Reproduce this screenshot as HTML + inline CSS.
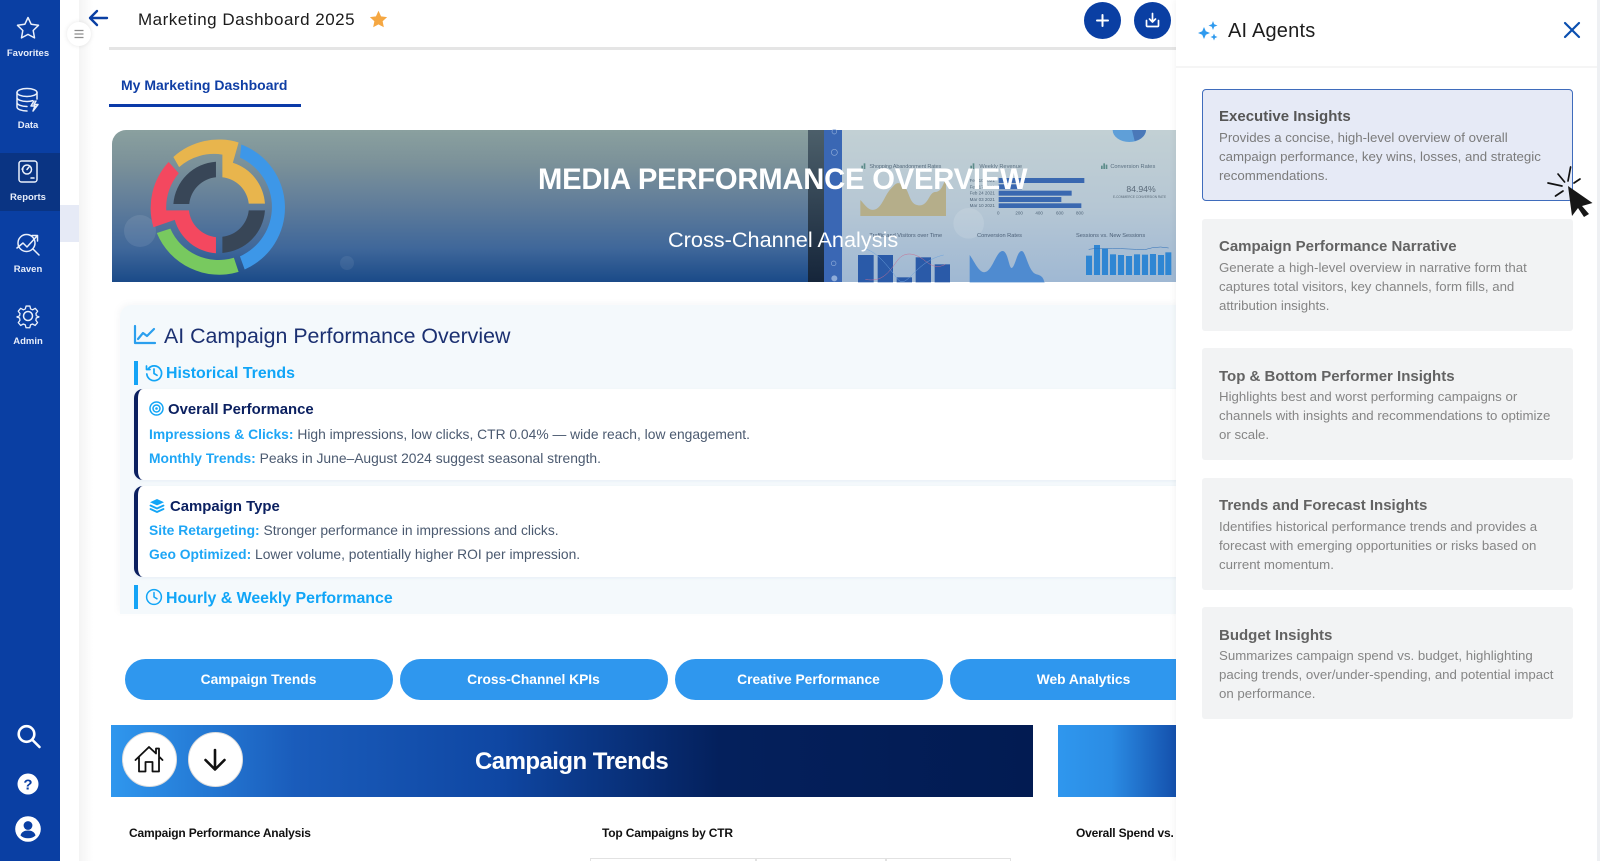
<!DOCTYPE html>
<html lang="en"><head><meta charset="utf-8"><title>Marketing Dashboard 2025</title>
<style>
*{box-sizing:border-box}
html{background:#fff}
html,body{margin:0;padding:0;width:1600px;height:861px;overflow:hidden;font-family:"Liberation Sans",sans-serif}
body{background:#fff;filter:blur(.3px)}
.a{position:absolute;white-space:nowrap}
#side{position:absolute;left:0;top:0;width:60px;height:861px;background:#0a3fa3}
.lbl{position:absolute;left:-2px;width:60px;text-align:center;color:#e8eefa;font-size:9.5px;font-weight:bold;line-height:12px}
.ic{position:absolute;left:14px;width:28px;height:28px}
.ic *{fill:none;stroke:#eaf0fb;stroke-width:1.5;stroke-linecap:round;stroke-linejoin:round}
.hd{color:#10a5f7;font-weight:bold;font-size:15.9px;line-height:20px}
.bar{position:absolute;left:134px;width:3.5px;background:#14a4f6}
.card{position:absolute;left:134px;width:1060px;background:#fff;border-left:4px solid #0b2060;border-radius:9px 0 0 9px;box-shadow:0 1px 3px rgba(80,120,160,.08)}
.ct{color:#0b2060;font-weight:bold;font-size:14.9px;line-height:18px}
.ln{font-size:13.84px;line-height:18px;color:#4b5a70}
.ln b{color:#1ea6f6}
.pill{position:absolute;top:659px;height:41px;width:268px;border-radius:21px;background:#2f97ee;color:#fff;font-size:13.8px;font-weight:bold;text-align:center;line-height:42px}
.ag{position:absolute;left:1202px;width:371px;height:112px;background:#f2f3f4;border-radius:3px;color:#858585}
.ag h3{margin:0;position:absolute;top:18.500px;left:17px;font-size:15px;line-height:20px;color:#636363;font-weight:bold;white-space:nowrap}
.ag p{margin:0;position:absolute;top:39px;left:17px;font-size:13.25px;line-height:19px;white-space:nowrap}
.sub{font-size:12px;letter-spacing:-.18px;font-weight:bold;color:#111;line-height:16px}
</style></head><body>

<!-- gutter -->
<div class="a" style="left:60px;top:205px;width:19px;height:37px;background:#e6eaf6"></div>
<div class="a" style="left:79px;top:0;width:14px;height:861px;background:linear-gradient(90deg,#f4f4f4,#fff)"></div>

<!-- top bar -->
<svg class="a" style="left:87px;top:8px" width="22" height="20" viewBox="0 0 22 20"><path d="M20 10H3M10 3L3 10l7 7" fill="none" stroke="#0a3fa3" stroke-width="2.400" stroke-linecap="round" stroke-linejoin="round"/></svg>
<div class="a" style="left:138px;top:9px;font-size:17px;line-height:22px;color:#1b1b1b;letter-spacing:.5px">Marketing Dashboard 2025</div>
<svg class="a" style="left:369px;top:10px" width="19" height="18" viewBox="0 0 24 23"><path d="M12 1l3.300 7.200 7.700.9-5.700 5.300 1.500 7.700L12 18.300 5.200 22.100l1.500-7.700L1 9.100l7.700-.9z" fill="#f5a742"/></svg>
<div class="a" style="left:109px;top:47px;width:1067px;height:2.500px;background:#e5e5e5"></div>
<div class="a" style="left:1084px;top:2px;width:37px;height:37px;border-radius:50%;background:#0a3fa3"></div>
<svg class="a" style="left:1084px;top:2px" width="37" height="37" viewBox="0 0 37 37"><path d="M18.500 13v11M13 18.500h11" stroke="#fff" stroke-width="2" stroke-linecap="round"/></svg>
<div class="a" style="left:1134px;top:2px;width:37px;height:37px;border-radius:50%;background:#0a3fa3"></div>
<svg class="a" style="left:1134px;top:2px" width="37" height="37" viewBox="0 0 37 37"><path d="M18.500 11.500v8.500M15.500 17l3 3 3-3M12.500 18.500v5a1 1 0 0 0 1 1h10a1 1 0 0 0 1-1v-5" fill="none" stroke="#fff" stroke-width="1.700" stroke-linecap="round" stroke-linejoin="round"/></svg>

<!-- tab -->
<div class="a" style="left:121px;top:76px;font-size:14px;line-height:18px;font-weight:bold;color:#0f3ea5">My Marketing Dashboard</div>
<div class="a" style="left:109px;top:104px;width:192px;height:2.500px;background:#0a3aa8"></div>

<!-- hero banner -->
<div class="a" style="left:112px;top:130px;width:1064px;height:152px;border-radius:14px 0 0 0;overflow:hidden;background:linear-gradient(180deg,#8aa09f 0%,#7b9199 22%,#5f7c9a 50%,#3f679a 78%,#1a4a88 100%)">
  <div class="a" style="left:12px;top:85px;width:32px;height:32px;border-radius:50%;background:rgba(255,255,255,.09)"></div>
  <div class="a" style="left:228px;top:126px;width:14px;height:14px;border-radius:50%;background:rgba(255,255,255,.07)"></div>
  <div class="a" style="left:696px;top:0;width:16px;height:152px;background:linear-gradient(180deg,#4c5f6a,#15253a)"></div>
  <div class="a" style="left:712px;top:0;width:18px;height:152px;background:#3a67b4"></div>
  <div class="a" style="left:730px;top:0;width:334px;height:152px;background:linear-gradient(180deg,#c2d0d4,#b6c7d4 50%,#9fb8d3)"></div>
</div>
<svg class="a" style="left:780px;top:120px;overflow:hidden" width="396" height="170" viewBox="0 0 1176 510" font-family="Liberation Sans, sans-serif">
  <circle cx="157" cy="97" r="9" fill="none" stroke="#8facd8" stroke-width="2"/>
  <circle cx="157" cy="35" r="7" fill="none" stroke="#8facd8" stroke-width="2"/>
  <circle cx="155" cy="430" r="7" fill="none" stroke="#8facd8" stroke-width="2"/>
  <circle cx="157" cy="475" r="9" fill="#8facd8"/>
  <path d="M992 30a50 36 0 0 0 100 0z" fill="#5f9fd8"/><path d="M1050 30h42a46 36 0 0 1-34 33z" fill="#4a78b8"/>
  <path d="M235 288V240c15 15 25 35 45 28s30-45 45-60 20-28 40-10 15 55 45 58 30-40 50-40 25-30 32-40v112z" fill="#b5ae8a"/>
  <text x="262" y="144" font-size="17" fill="#5a6f80" textLength="216">Shopping Abandonment Rates</text>
  <text x="592" y="144" font-size="17" fill="#5a6f80">Weekly Revenue</text>
  <text x="985" y="144" font-size="17" fill="#5a6f80">Conversion Rates</text>
  <g fill="#5c8c8a"><rect x="238" y="137" width="5" height="10"/><rect x="245" y="130" width="5" height="17"/><rect x="565" y="137" width="5" height="10"/><rect x="572" y="130" width="5" height="17"/><rect x="957" y="137" width="5" height="10"/><rect x="964" y="130" width="5" height="17"/><rect x="971" y="134" width="5" height="13"/></g>
  <g fill="#3a68b0"><rect x="650" y="174" width="257" height="15"/><rect x="650" y="193" width="70" height="15"/><rect x="650" y="212" width="219" height="15"/><rect x="650" y="231" width="188" height="15"/><rect x="650" y="250" width="248" height="14"/></g>
  <g font-size="13.500" fill="#4f6478"><text x="563" y="186">Feb 10 2021</text><text x="563" y="205">Feb 17 2021</text><text x="563" y="224">Feb 24 2021</text><text x="563" y="243">Mar 03 2021</text><text x="563" y="261">Mar 10 2021</text>
  <text x="645" y="284">0</text><text x="700" y="284">200</text><text x="760" y="284">400</text><text x="822" y="284">600</text><text x="882" y="284">800</text></g>
  <text x="1033" y="216" font-size="26" fill="#5a6a78">84.94%</text>
  <text x="993" y="234" font-size="9.500" fill="#5a6a78">E-COMMERCE CONVERSION RATE</text>
  <circle cx="560" cy="310" r="46" fill="rgba(255,255,255,.12)"/>
  <text x="262" y="351" font-size="17" fill="#4c6078">Traffic and Visitors over Time</text>
  <text x="585" y="351" font-size="17" fill="#4c6078">Conversion Rates</text>
  <text x="882" y="351" font-size="17" fill="#4c6078">Sessions vs. New Sessions</text>
  <g fill="#2a5aa8"><rect x="228" y="405" width="47" height="82"/><rect x="287" y="405" width="46" height="82"/><rect x="344" y="472" width="46" height="15"/><rect x="401" y="412" width="46" height="75"/><rect x="458" y="433" width="46" height="54"/></g>
  <path d="M250 478c50 10 70-20 95-55s60-20 85 0 40 20 60 10" fill="none" stroke="#c96f92" stroke-width="1.500"/>
  <path d="M245 385c40 10 70 50 100 90s50-50 140-70" fill="none" stroke="#6ea3dd" stroke-width="1.500"/>
  <path d="M563 487V405c15 20 30 60 50 50s30-60 48-62 20 60 30 50 15-50 28-50 20 65 45 70 20 24 25 24z" fill="#4f8bd0"/>
  <g fill="#2f86d3"><rect x="912" y="407" width="18" height="58"/><rect x="936" y="375" width="18" height="90"/><rect x="960" y="385" width="18" height="80"/><rect x="984" y="403" width="18" height="62"/><rect x="1008" y="405" width="18" height="60"/><rect x="1032" y="408" width="18" height="57"/><rect x="1056" y="403" width="18" height="62"/><rect x="1080" y="404" width="18" height="61"/><rect x="1104" y="402" width="18" height="63"/><rect x="1128" y="405" width="18" height="60"/><rect x="1150" y="397" width="18" height="68"/></g>
  <path d="M920 388l24-3 24 2 24-2 24 1 24 1 24 1 24 1 24-6 24-2 24 3" fill="none" stroke="#2d6fb8" stroke-width="1.500"/>
</svg>
<svg class="a" style="left:146px;top:134px" width="146" height="146" viewBox="-216 -216 432 432">
  <path d="M66-185A200 200 0 0 1 76 185L62 146A160 160 0 0 0 62-146Z" fill="#3d97e8"/>
  <path d="M-135-148A200 200 0 0 1 58-191L41-131A137 137 0 0 1 136-10L88-10A88 88 0 0 0 10-88L10-155A155 155 0 0 0-118-118Z" fill="#e8b54d"/>
  <path d="M-9-134A135 135 0 0 0-135-9L-88-9A88 88 0 0 1-9-88Z" fill="#384657"/>
  <path d="M10 136A136 136 0 0 0 136 10L88 10A88 88 0 0 1 10 88Z" fill="#384657"/>
  <path d="M-149-133A200 200 0 0 0-194 60L-131 38A137 137 0 0 0-9 137L-9 89A89 89 0 0 1-89 10L-156 10A156 156 0 0 1-119-100Z" fill="#f4485f"/>
  <path d="M-184 77A200 200 0 0 0 58 192L44 150A156 156 0 0 1-144 64Z" fill="#78c95f"/>
</svg>
<div class="a" style="left:538px;top:161px;font-size:29.200px;line-height:38px;color:#fff;font-weight:bold;letter-spacing:-.2px">MEDIA PERFORMANCE OVERVIEW</div>
<div class="a" style="left:668px;top:226px;font-size:21.700px;line-height:28px;color:#fff">Cross-Channel Analysis</div>

<!-- AI card -->
<div class="a" style="left:120px;top:305px;width:1060px;height:309px;background:#f4f9fc;border-radius:12px 0 0 0;overflow:hidden;box-shadow:-2px -2px 6px rgba(120,140,160,.06)"></div>
<svg class="a" style="left:133px;top:324px" width="24" height="22" viewBox="0 0 24 22"><path d="M2 2v17h20M5 15l5-6 4 3 7-7" fill="none" stroke="#2a9fee" stroke-width="2.200" stroke-linecap="round" stroke-linejoin="round"/></svg>
<div class="a" style="left:164px;top:321.500px;font-size:21.350px;line-height:28px;color:#1b3071">AI Campaign Performance Overview</div>

<div class="bar" style="top:361px;height:24px"></div>
<svg class="a" style="left:145px;top:364px" width="18" height="18" viewBox="0 0 18 18"><path d="M3.500 4.500A7.400 7.400 0 1 1 1.800 10M1.500 2v3.500H5M9 5v4.500l3 1.800" fill="none" stroke="#12a5f6" stroke-width="1.700" stroke-linecap="round" stroke-linejoin="round"/></svg>
<div class="a hd" style="left:166px;top:364px">Historical Trends</div>

<div class="card" style="top:389px;height:91px"></div>
<svg class="a" style="left:149px;top:401px" width="15" height="15" viewBox="0 0 15 15"><g fill="none" stroke="#12a5f6" stroke-width="1.500"><circle cx="7.500" cy="7.500" r="6.500"/><circle cx="7.500" cy="7.500" r="3.500"/></g><circle cx="7.500" cy="7.500" r="1.300" fill="#12a5f6"/></svg>
<div class="a ct" style="left:168px;top:401px">Overall Performance</div>
<div class="a ln" style="left:149px;top:424.500px"><b>Impressions &amp; Clicks:</b> High impressions, low clicks, CTR 0.04% — wide reach, low engagement.</div>
<div class="a ln" style="left:149px;top:448.500px"><b>Monthly Trends:</b> Peaks in June–August 2024 suggest seasonal strength.</div>

<div class="card" style="top:486px;height:91px"></div>
<svg class="a" style="left:149px;top:498px" width="16" height="16" viewBox="0 0 16 16"><path d="M8 1l7 3.200-7 3.200-7-3.200z" fill="#12a5f6"/><path d="M1.500 7.500L8 10.500l6.500-3M1.500 11L8 14l6.500-3" fill="none" stroke="#12a5f6" stroke-width="1.800" stroke-linejoin="round" stroke-linecap="round"/></svg>
<div class="a ct" style="left:170px;top:498px">Campaign Type</div>
<div class="a ln" style="left:149px;top:521px"><b>Site Retargeting:</b> Stronger performance in impressions and clicks.</div>
<div class="a ln" style="left:149px;top:545px"><b>Geo Optimized:</b> Lower volume, potentially higher ROI per impression.</div>

<div class="bar" style="top:585px;height:24px"></div>
<svg class="a" style="left:145px;top:588px" width="18" height="18" viewBox="0 0 18 18"><circle cx="9" cy="9" r="7.400" fill="none" stroke="#12a5f6" stroke-width="1.500"/><path d="M9 4.500V9l3 1.800" fill="none" stroke="#12a5f6" stroke-width="1.500" stroke-linecap="round"/></svg>
<div class="a hd" style="left:166px;top:589px">Hourly &amp; Weekly Performance</div>

<!-- pills -->
<div class="pill" style="left:124.500px">Campaign Trends</div>
<div class="pill" style="left:399.500px">Cross-Channel KPIs</div>
<div class="pill" style="left:674.500px">Creative Performance</div>
<div class="pill" style="left:949.500px">Web Analytics</div>

<!-- section banners -->
<div class="a" style="left:111px;top:725px;width:922px;height:72px;background:linear-gradient(90deg,#2f97ee 0%,#1a5cbb 20%,#0f47a3 42%,#04205c 66%,#021b52 100%)"></div>
<div class="a" style="left:122px;top:732px;width:55px;height:55px;border-radius:50%;background:#fff;border:1px solid #dcdcdc"></div>
<div class="a" style="left:188px;top:732px;width:55px;height:55px;border-radius:50%;background:#fff;border:1px solid #dcdcdc"></div>
<svg class="a" style="left:134px;top:745px" width="30" height="28" viewBox="0 0 30 28"><path d="M1.500 15L15 2l7 6.500V3.500h3V11.500L28.500 15M5 12.500V26.500h6.500V17h7v9.500H25V12.500" fill="none" stroke="#111" stroke-width="1.800" stroke-linejoin="round" stroke-linecap="round"/></svg>
<svg class="a" style="left:203px;top:748px" width="24" height="24" viewBox="0 0 24 24"><path d="M12 2v19M2.500 12l9.500 9.500L21.500 12" fill="none" stroke="#111" stroke-width="2.600" stroke-linecap="round" stroke-linejoin="round"/></svg>
<div class="a" style="left:475px;top:745.500px;font-size:24px;line-height:32px;font-weight:bold;color:#fff;letter-spacing:-.55px">Campaign Trends</div>
<div class="a" style="left:1058px;top:725px;width:118px;height:72px;background:linear-gradient(90deg,#2f97ee 0%,#2b8ce4 45%,#1450ac 100%)"></div>

<div class="a sub" style="left:129px;top:825px">Campaign Performance Analysis</div>
<div class="a sub" style="left:602px;top:825px">Top Campaigns by CTR</div>
<div class="a sub" style="left:1076px;top:825px">Overall Spend vs.</div>
<div class="a" style="left:590px;top:858px;width:421px;height:3px;background:#fff;border-top:1.500px solid #e2e2e2;border-left:1.500px solid #e2e2e2;border-right:1.500px solid #e2e2e2"></div>
<div class="a" style="left:755px;top:858px;width:1.500px;height:3px;background:#e2e2e2"></div>
<div class="a" style="left:885px;top:858px;width:1.500px;height:3px;background:#e2e2e2"></div>

<!-- right panel -->
<div class="a" style="left:1176px;top:0;width:424px;height:861px;background:#fff;box-shadow:-2px 0 5px rgba(0,0,0,.04)"></div>
<div class="a" style="left:1176px;top:66px;width:421px;height:1.500px;background:#f5f5f5"></div>
<div class="a" style="left:1597px;top:0;width:3px;height:861px;background:#eef0f3"></div>
<svg class="a" style="left:1197px;top:20px" width="24" height="22" viewBox="0 0 24 22" fill="#2f9aee"><path d="M7 7l1.800 4.200L13 13l-4.200 1.800L7 19l-1.800-4.200L1 13l4.200-1.800z"/><path d="M16 1l1.200 3.300L20.500 5.500l-3.300 1.200L16 10l-1.200-3.300L11.500 5.500l3.300-1.200z"/><path d="M17 13.500l1 2.500 2.500 1-2.500 1-1 2.500-1-2.500-2.500-1 2.500-1z"/></svg>
<div class="a" style="left:1228px;top:18px;font-size:20px;line-height:26px;color:#1d1d1d;letter-spacing:.2px">AI Agents</div>
<svg class="a" style="left:1563px;top:21px" width="18" height="18" viewBox="0 0 18 18"><path d="M2 2l14 14M16 2L2 16" stroke="#0a4fb0" stroke-width="2.200" stroke-linecap="round"/></svg>

<div class="ag" style="top:89px;background:#e6eaf6;border:1.500px solid #3f6cbc;border-radius:4px;color:#7b7b7b">
  <h3 style="top:17px;left:16px;color:#565656">Executive Insights</h3>
  <p style="top:37.500px;left:16px">Provides a concise, high-level overview of overall<br>campaign performance, key wins, losses, and strategic<br>recommendations.</p>
</div>
<div class="ag" style="top:218.500px"><h3>Campaign Performance Narrative</h3><p>Generate a high-level overview in narrative form that<br>captures total visitors, key channels, form fills, and<br>attribution insights.</p></div>
<div class="ag" style="top:348px"><h3>Top &amp; Bottom Performer Insights</h3><p>Highlights best and worst performing campaigns or<br>channels with insights and recommendations to optimize<br>or scale.</p></div>
<div class="ag" style="top:477.500px"><h3>Trends and Forecast Insights</h3><p>Identifies historical performance trends and provides a<br>forecast with emerging opportunities or risks based on<br>current momentum.</p></div>
<div class="ag" style="top:607px"><h3>Budget Insights</h3><p>Summarizes campaign spend vs. budget, highlighting<br>pacing trends, over/under-spending, and potential impact<br>on performance.</p></div>

<!-- cursor -->
<svg class="a" style="left:1545px;top:165px" width="55" height="60" viewBox="0 0 55 60"><g stroke="#111" stroke-width="1.700" stroke-linecap="round"><path d="M25.600 2L23 16M13 9l6.600 8M35 14l-6 4M3 18l14 3M10.500 31l7.500-5"/></g><path d="M23 21L47.500 38 37 41 44 49 39 52 33 43 27 51Z" fill="#161616"/></svg>

<!-- sidebar -->
<div id="side">
  <div class="a" style="left:0;top:153px;width:60px;height:58px;background:#0a3483"></div>
  <svg class="ic" style="top:14px" viewBox="0 0 28 28"><path d="M14 3.500l3.200 6.800 7.300 1-5.300 5.200 1.300 7.400L14 20.400l-6.500 3.500 1.300-7.400-5.300-5.200 7.300-1z"/></svg>
  <div class="lbl" style="top:48px">Favorites</div>
  <svg class="ic" style="top:86px" viewBox="0 0 28 28"><ellipse cx="13" cy="6.500" rx="10" ry="4"/><path d="M3 6.500V21c0 2.200 4.500 4 10 4M3 11.500c0 2.200 4.500 4 10 4 2 0 4-.2 5.500-.8M3 16.500c0 2.200 4.500 4 10 4M23 6.500V13M20 15l-3 5h4l-2 5 5-6.500h-4l2-3.500"/></svg>
  <div class="lbl" style="top:119.500px">Data</div>
  <svg class="ic" style="top:158px" viewBox="0 0 28 28"><rect x="5" y="3" width="18" height="21" rx="2.500"/><circle cx="13" cy="11.500" r="4.500"/><path d="M13 11.500l2-2.500M8 11h1M17 20h3"/></svg>
  <div class="lbl" style="top:191.500px">Reports</div>
  <svg class="ic" style="top:230px" viewBox="0 0 28 28"><circle cx="12.500" cy="13" r="8.500"/><path d="M3 18l6-5 4 4 10-11M18 5.500h5.500V11M19 19l6 6"/></svg>
  <div class="lbl" style="top:263.500px">Raven</div>
  <svg class="ic" style="top:302px" viewBox="0 0 28 28"><circle cx="14" cy="14" r="4.500"/><path d="M11.800 3h4.400l.8 3.300 2.300 1 3-1.700 2.800 3.300-2 2.700.5 2.600 3 1.200-.1 0v.1l-3 1.200-.5 2.600 2 2.700-2.800 3.300-3-1.700-2.300 1-.8 3.300h-4.400l-.8-3.300-2.300-1-3 1.700-2.800-3.300 2-2.700-.5-2.600-3-1.200v-.1l3-1.200.5-2.600-2-2.700 2.800-3.300 3 1.700 2.300-1z" transform="translate(14 14) scale(.87) translate(-14 -14.400)"/></svg>
  <div class="lbl" style="top:336px">Admin</div>
  <svg class="ic" style="top:722px" viewBox="0 0 28 28"><circle cx="12.500" cy="12" r="7.800" style="stroke:#fff;stroke-width:2.600"/><path d="M18.500 18l7 7" style="stroke:#fff;stroke-width:2.600"/></svg>
  <svg style="position:absolute;left:17px;top:773px" width="22" height="22" viewBox="0 0 22 22"><circle cx="11" cy="11" r="10.500" fill="#fff"/><text x="11" y="16.500" text-anchor="middle" font-size="15" font-weight="bold" fill="#0a3fa3" font-family="Liberation Sans, sans-serif">?</text></svg>
  <svg style="position:absolute;left:15px;top:816px" width="26" height="26" viewBox="0 0 26 26"><circle cx="13" cy="13" r="12.800" fill="#fff"/><circle cx="13" cy="9.500" r="4.400" fill="#0a3fa3"/><path d="M5.500 19.500c.8-3.500 3.800-5 7.500-5s6.700 1.500 7.500 5c-2 1.800-4.500 2.800-7.500 2.800s-5.500-1-7.500-2.800z" fill="#0a3fa3"/></svg>
</div>

<!-- collapse toggle -->
<div class="a" style="left:67px;top:22px;width:24px;height:24px;border-radius:50%;background:#fff;box-shadow:0 0 5px rgba(0,0,0,.1)"></div>
<svg class="a" style="left:74px;top:29px" width="10" height="10" viewBox="0 0 10 10"><path d="M.5 1.500h9M.5 5h9M.5 8.500h9" stroke="#8d8d8d" stroke-width="1.300"/></svg>

</body></html>
